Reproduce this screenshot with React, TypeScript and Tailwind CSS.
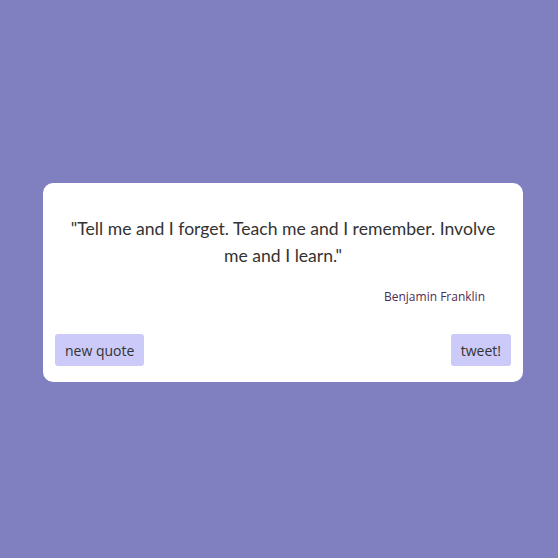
export default function App() {
  return (
    <div className="min-h-[558px] bg-[#807fbf] pl-[43px] pt-[183px]">
      <div className="flex h-[199px] w-[480px] flex-col rounded-[10px] bg-white px-3 pb-4 pt-[32px]">
        <p className="px-[13px] text-center font-['Lato',sans-serif] text-[17.6px] leading-[27px] text-[#333333]">
          "Tell me and I forget. Teach me and I remember. Involve me and I learn."
        </p>
        <p className="mt-[19px] pr-[26px] text-right font-['Open_Sans',sans-serif] text-[12px] text-[#4d2c55]">Benjamin Franklin</p>
        <div className="mt-auto flex items-center justify-between">
          <button className="h-8 rounded-[3px] bg-[#cbcaf8] px-[10px] font-['Open_Sans',sans-serif] text-[14px] text-[#333333]">new quote</button>
          <button className="h-8 rounded-[3px] bg-[#cbcaf8] px-[10px] font-['Open_Sans',sans-serif] text-[14px] text-[#333333]">tweet!</button>
        </div>
      </div>
    </div>
  );
}
